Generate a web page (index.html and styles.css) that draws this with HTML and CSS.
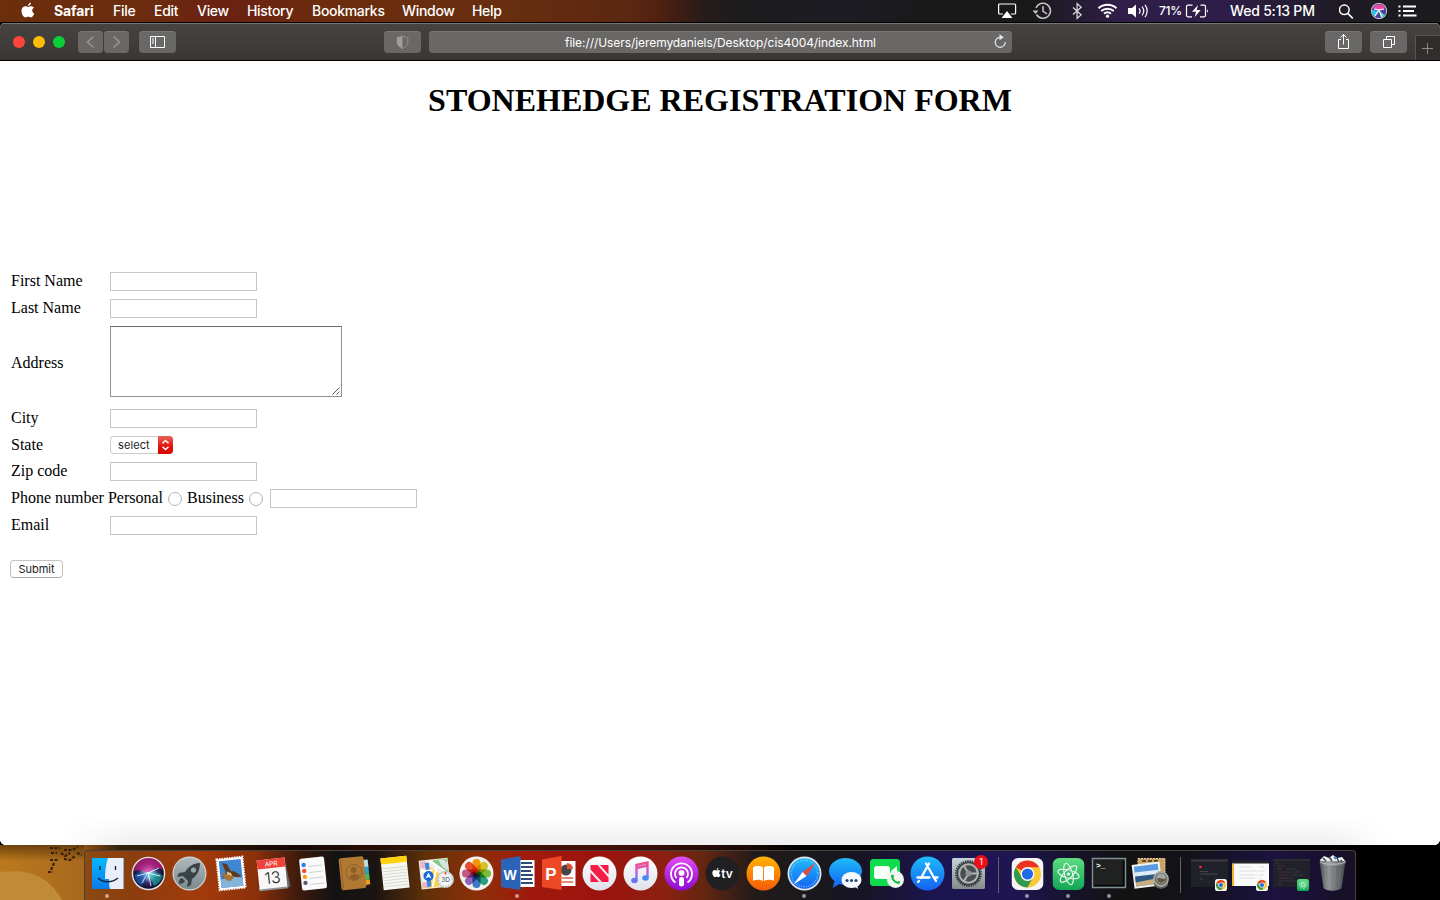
FILE: index.html
```html
<!DOCTYPE html>
<html lang="en">
<head>
<meta charset="utf-8">
<title>Stonehedge Registration Form</title>
<link rel="stylesheet" href="styles.css">
</head>
<body>
<svg class="defs" width="0" height="0" aria-hidden="true">
<defs>
<linearGradient id="gBlue" x1="0" y1="0" x2="0" y2="1"><stop offset="0" stop-color="#1ebcfa"/><stop offset="1" stop-color="#1560f0"/></linearGradient>
<linearGradient id="gFinder" x1="0" y1="0" x2="0" y2="1"><stop offset="0" stop-color="#04b8ff"/><stop offset="1" stop-color="#0d7bea"/></linearGradient>
<linearGradient id="gGrey" x1="0" y1="0" x2="0" y2="1"><stop offset="0" stop-color="#aeb9bd"/><stop offset="1" stop-color="#7c898d"/></linearGradient>
<linearGradient id="gWhite" x1="0" y1="0" x2="0" y2="1"><stop offset="0" stop-color="#fff"/><stop offset="1" stop-color="#dfe2ec"/></linearGradient>
<linearGradient id="gPurple" x1="0" y1="0" x2="0" y2="1"><stop offset="0" stop-color="#e34cf4"/><stop offset="1" stop-color="#8d0bd0"/></linearGradient>
<linearGradient id="gOrange" x1="0" y1="0" x2="0" y2="1"><stop offset="0" stop-color="#ffb400"/><stop offset="1" stop-color="#f75a08"/></linearGradient>
<linearGradient id="gGreen" x1="0" y1="0" x2="0" y2="1"><stop offset="0" stop-color="#5fdc80"/><stop offset="1" stop-color="#12a557"/></linearGradient>
<linearGradient id="gMusic" gradientUnits="userSpaceOnUse" x1="0" y1="12" x2="0" y2="34"><stop offset="0" stop-color="#fb4c7c"/><stop offset=".5" stop-color="#c05ce8"/><stop offset="1" stop-color="#2f9bff"/></linearGradient>
<linearGradient id="gTrash" x1="0" y1="0" x2="1" y2="0"><stop offset="0" stop-color="#55595a"/><stop offset=".35" stop-color="#9a9e9f"/><stop offset=".65" stop-color="#75797a"/><stop offset="1" stop-color="#4b4f50"/></linearGradient>
<linearGradient id="gRim" x1="0" y1="0" x2="0" y2="1"><stop offset="0" stop-color="#c3d3d8"/><stop offset="1" stop-color="#858b8e"/></linearGradient>
<radialGradient id="gSiri"><stop offset="0" stop-color="#fff"/><stop offset=".22" stop-color="#9cc2e8"/><stop offset=".6" stop-color="#35306d"/><stop offset="1" stop-color="#0c0a22"/></radialGradient>
<symbol id="apple" viewBox="0 0 14 15"><path d="M9.900 0C8.300.3 7.100 1.700 7.200 3.400 8.800 3.300 10 1.800 9.900 0zM7.300 4.500C6.500 4.500 5.700 3.800 4.400 3.800 2.400 3.800.5 5.400.5 8.400c0 3.200 2.200 6.500 4 6.500 1 0 1.500-.6 2.800-.6s1.700.6 2.700.6c1.400 0 2.700-2 3.300-3.800-1.300-.5-2.100-1.600-2.100-3 0-1.200.6-2.100 1.700-2.800-.7-1-1.800-1.500-2.900-1.500-1.200 0-2 .7-2.700.7z"/></symbol>
<symbol id="chrome" viewBox="0 0 32 32"><rect width="32" height="32" rx="7" fill="#f5f5f5"/><circle cx="16" cy="16" r="13.500" fill="#fcc934"/><path d="M16 16 4.300 9.250A13.500 13.500 0 0 1 27.700 9.250H16z" fill="#ea3323"/><path d="M4.300 9.250A13.500 13.500 0 0 0 16 29.500l5.600-10.300L10.400 19.200z" fill="#31994f"/><circle cx="16" cy="16" r="6.900" fill="#fff"/><circle cx="16" cy="16" r="5.600" fill="#1f6be8"/></symbol>
<symbol id="atom" viewBox="0 0 32 32"><rect width="32" height="32" rx="7" fill="url(#gGreen)"/><g fill="none" stroke="#fff"><ellipse cx="16" cy="16" rx="11" ry="4" transform="rotate(15 16 16)"/><ellipse cx="16" cy="16" rx="11" ry="4" transform="rotate(75 16 16)"/><ellipse cx="16" cy="16" rx="11" ry="4" transform="rotate(135 16 16)"/></g><circle cx="16" cy="16" r="1.600" fill="#fff"/></symbol>
</defs>
</svg>

<header class="menubar">
  <svg class="apple-logo" width="14" height="16"><use href="#apple" width="14" height="16"/></svg>
  <nav class="menus">
    <b>Safari</b><span>File</span><span>Edit</span><span>View</span><span>History</span><span>Bookmarks</span><span>Window</span><span>Help</span>
  </nav>
  <div class="status">
    <svg class="status-icons" width="160" height="22" fill="none" stroke="#fff" stroke-width="1.200">
      <path d="M5 14H1.600a1 1 0 0 1-1-1V5a1 1 0 0 1 1-1h15a1 1 0 0 1 1 1v8a1 1 0 0 1-1 1H13"/><path d="M9 11l5.500 7h-11z" fill="#fff" stroke="none"/>
      <g stroke="#c6c6c6" stroke-width="1.500"><path d="M38 8a7.500 7.500 0 1 1 .5 6.500"/><path d="M45 6v5.400l4 2.500"/><path d="M34.500 10.500h6l-3 3.600z" fill="#c6c6c6" stroke="none"/></g>
      <path d="M75 7.500l8.200 7.200-4.100 3.800V3.500l4.100 3.800-8.200 7.200" stroke="#ddd"/>
      <g stroke-width="2"><path d="M100.500 8.200a13.600 13.600 0 0 1 18 0"/><path d="M103.200 11a9.800 9.800 0 0 1 12.600 0"/><path d="M106 13.600a5.600 5.600 0 0 1 7 0"/></g><circle cx="109.500" cy="16.200" r="1.600" fill="#fff" stroke="none"/>
      <path d="M130 8h4l4-3.500v13L134 14h-4z" fill="#fff" stroke="none"/><path d="M141 8.400a4 4 0 0 1 0 5.200M144 6.600a7 7 0 0 1 0 8.800M147 4.800a10 10 0 0 1 0 12.400"/>
    </svg>
    <span class="percent">71%</span>
    <svg class="battery" width="24" height="22" fill="none" stroke="#fff" stroke-width="1.200"><path d="M7.500 5.200H3a1.500 1.500 0 0 0-1.500 1.500v8.600A1.500 1.500 0 0 0 3 16.800h4M15.500 5.200H19a1.500 1.500 0 0 1 1.500 1.500v8.600a1.500 1.500 0 0 1-1.500 1.500h-4"/><path d="M13 5l-6 6.800h4L9.700 17l6-7h-4zM22 9.200c1.300.6 1.300 3 0 3.600z" fill="#fff" stroke="none"/></svg>
    <span class="clock">Wed 5:13 PM</span>
    <svg class="status-right" width="80" height="22" fill="none" stroke="#fff" stroke-width="1.500"><circle cx="5.300" cy="9.800" r="4.800"/><path d="M8.800 13.400l5 5"/>
      <circle cx="40" cy="11" r="8" fill="#f1f1f6" stroke="none"/><circle cx="40" cy="11" r="7.300" fill="#533b9d" stroke="none"/><path d="M34 8a7 7 0 0 1 12 0l-6 3z" fill="#ee49a7" stroke="none"/><path d="M33 10l7 1-4 6a7 7 0 0 1-3-7z" fill="#2cc4e9" stroke="none"/><path d="M40 11l6 4a7 7 0 0 1-4 3z" fill="#38dfc2" stroke="none"/><path d="M36 16l4-6 3 7M40 10l5-1M40 10l-5-1" stroke="#fff" stroke-width="1.100"/>
      <path d="M64 6.500h13M64 11h11M64 15.500h13.500M59.500 6.500h2M59.500 11h2M59.500 15.500h2" stroke-width="2"/></svg>
  </div>
</header>

<main class="window">
  <div class="toolbar">
    <div class="lights"><i class="red"></i><i class="yellow"></i><i class="green"></i></div>
    <div class="tool nav back"><svg width="25" height="22" fill="none" stroke="#979695" stroke-width="1.500"><path d="M15.500 5.500l-6 5.500 6 5.500"/></svg></div>
    <div class="tool nav"><svg width="25" height="22" fill="none" stroke="#979695" stroke-width="1.500"><path d="M9.500 5.500l6 5.500-6 5.500"/></svg></div>
    <div class="tool sidebar"><svg width="37" height="22" fill="none" stroke="#fff"><path d="M11.500 5.500h14v11h-14zM16.500 5.500v11M13 8h2M13 10h2M13 12h2"/></svg></div>
    <div class="tool privacy"><svg width="37" height="22"><path d="M18.500 4.800c1.500 1.200 3.500 1.500 5.300 1.700v5c0 2.500-2.500 4.500-5.300 6-2.800-1.500-5.300-3.500-5.300-6v-5c1.800-.2 3.800-.5 5.300-1.700z" fill="none" stroke="#929190"/><path d="M18.500 4.800v12.700c-2.800-1.500-5.300-3.500-5.300-6v-5c1.800-.2 3.800-.5 5.300-1.700z" fill="#a09f9e"/></svg></div>
    <div class="tool address"><span>file:///Users/jeremydaniels/Desktop/cis4004/index.html</span><svg width="14" height="16" fill="none" stroke="#e5e5e5" stroke-width="1.200"><path d="M7.500 3.300a5 5 0 1 0 4.700 4.700"/><path d="M6.500.2l4.300 3-4.300 3z" fill="#e5e5e5" stroke="none"/></svg></div>
    <div class="tool share"><svg width="37" height="22" fill="none" stroke="#fff"><path d="M16 8.500h-2.500v9h10v-9H21M18.500 13.500v-10M15.500 6.500l3-3 3 3"/></svg></div>
    <div class="tool tabs"><svg width="37" height="22" fill="none" stroke="#fff"><path d="M13.500 8.500h8v8h-8z"/><path d="M16.500 8V5.500h8v8H22"/></svg></div>
    <div class="newtab"><svg width="24" height="24" stroke="#8c8b8a"><path d="M6 12.500h11M11.500 7v11"/></svg></div>
  </div>

  <div class="page">
    <h1>STONEHEDGE REGISTRATION FORM</h1>
    <form>
      <div class="row"><label>First Name</label><input class="field" type="text"></div>
      <div class="row"><label>Last Name</label><input class="field" type="text"></div>
      <div class="row tall"><label>Address</label><div class="area"><svg width="10" height="10" stroke="#444" stroke-width=".9"><path d="M1.500 8.500L8.500 1.500M5.500 8.500L8.500 5.500"/></svg></div></div>
      <div class="row"><label>City</label><input class="field" type="text"></div>
      <div class="row state"><label>State</label><div class="select"><span>select</span><svg width="15" height="18" fill="none" stroke="#fff" stroke-width="1.400"><path d="M4.500 7.300l3-2.800 3 2.800M4.500 10.700l3 2.800 3-2.800"/></svg></div></div>
      <div class="row"><label>Zip code</label><input class="field" type="text"></div>
      <div class="row"><span class="phone">Phone number Personal</span><i class="radio"></i><span class="business">Business</span><i class="radio"></i><input class="field number" type="text"></div>
      <div class="row"><label>Email</label><input class="field" type="text"></div>
      <button class="submit" type="button">Submit</button>
    </form>
  </div>
</main>

<footer class="desktop">
  <svg class="wallpaper" width="84" height="55"><path d="M0 27c28-3 48 3 62 28H0z" fill="#c08b37"/><g fill="none" stroke="#3b1e08" stroke-width="2.200" stroke-dasharray="3 1.500"><path d="M50 3h10M64 5h8l6-3M51 8h6M61 8l4 3 5-3M64 14l6 1 5-4M77 8l5 2M50 15h8M54 18l-3 7M48 27h5"/></g></svg>
  <div class="dock">
    <svg class="app" viewBox="0 0 41 50"><path d="M5 8h31.500v31H5z" fill="url(#gFinder)"/><path d="M21 8h15.500v31H23c-.8-3-1-6-1-10h-4C18 20 19 14 21 8z" fill="#e8eff9"/><path d="M13 16v4M28.500 16v4" stroke="#172436" stroke-width="1.400"/><path d="M11 28c5 5 14 5 20 0" fill="none" stroke="#172436" stroke-width="1.300"/><circle class="running" cx="20" cy="46" r="2"/></svg>
    <svg class="app" viewBox="0 0 41 50"><circle cx="20.500" cy="23.500" r="16.800" fill="#e1e1e5"/><circle cx="20.500" cy="23.500" r="15.300" fill="url(#gSiri)"/><path d="M6 21C8 4 32 4 35 20c-7-4-10-1-14 3-5-1-9-4-15-2z" fill="#ed1e91" opacity=".62"/><path d="M6 25c5-3 10-3 15-2l-7 13c-4-2-7-6-8-11z" fill="#1769c8" opacity=".6"/><path d="M20 23c6-1 11-1 15 3-2 5-5 8-9 10z" fill="#14cab2" opacity=".55"/><path d="M9 26l11-3 11-5M20 22l3 14M20 22l-6 11M20 23l12 3" fill="none" stroke="#fff" opacity=".8"/></svg>
    <svg class="app" viewBox="0 0 41 50"><circle cx="20.500" cy="23.500" r="17" fill="#ced4d6"/><circle cx="20.500" cy="23.500" r="15.800" fill="url(#gGrey)"/><path d="M31 13c-7 0-12 4-15 9l-6 1-2 4 6-1 5 5-1 6 4-2 1-6c5-3 8-9 8-16z" fill="#3b4246"/><circle cx="24.500" cy="20" r="2.600" fill="#9ba6aa"/><path d="M13 28c-3 1-3 4-3 6 3 0 5-1 6-3z" fill="#3b4246"/></svg>
    <svg class="app" viewBox="0 0 41 50"><g transform="rotate(-6 21 23)"><path d="M8 8h26v31H8z" fill="#fff" stroke="#fff" stroke-width="2" stroke-dasharray="1.500 1"/><path d="M10 10h22v27H10z" fill="#3f86d3"/><path d="M10 29c5-3 9 2 14-2l8 2v8H10z" fill="#86b3da"/><path d="M13 12l5 2 3 7 4 1 6 5-4 1-6-2-5 2-4-2 4-4z" fill="#5b3c22"/><path d="M12 22l7 2 5 3-4 4-4-1-3-4z" fill="#a57436"/><path d="M17 21l4 2 1 3-5-2z" fill="#e1c08a"/></g></svg>
    <svg class="app" viewBox="0 0 41 50"><g transform="rotate(-6 21 23)"><path d="M6 37h29l1 3H7z" fill="#8e9292"/><path d="M35 11l3 27-3 1z" fill="#606a6c"/><path d="M7 9h28v29H7z" fill="#f7f7f7"/><path d="M7 9h28v9H7z" fill="#ef423a"/><text x="21" y="16" class="cal-month">APR</text><text x="21" y="33.500" class="cal-day">13</text></g></svg>
    <svg class="app" viewBox="0 0 41 50"><g transform="rotate(-6 21 23)"><rect x="8.500" y="7.500" width="25" height="32" rx="2" fill="#fafafa"/><circle cx="12.500" cy="14" r="2.200" fill="#307cf4"/><circle cx="12.500" cy="20" r="2.200" fill="#f54b3b"/><circle cx="12.500" cy="26" r="2.200" fill="#ff9e12"/><circle cx="12.500" cy="32" r="2.200" fill="#525e6b"/><path d="M17 16h14M17 22h14M17 28h14M17 34h14" stroke="#d1d1d4"/></g></svg>
    <svg class="app" viewBox="0 0 41 50"><g transform="rotate(-6 21 23)"><path d="M31 11h5v8h-5z" fill="#c2d9dc"/><path d="M31 18h5v7h-5z" fill="#2aa5c8"/><path d="M31 25h5v6h-5z" fill="#50b85a"/><path d="M31 31h5v5h-5z" fill="#f39b1f"/><rect x="7" y="7" width="25" height="32" rx="2" fill="#b07a35"/><path d="M9 8v31" stroke="#94642a"/><circle cx="21" cy="22.500" r="8" fill="none" stroke="#946429"/><circle cx="21" cy="20" r="3" fill="#8d5f27"/><path d="M15.500 27c2-4 9-4 11 0-3 4-8 4-11 0z" fill="#8d5f27"/></g></svg>
    <svg class="app" viewBox="0 0 41 50"><g transform="rotate(-6 21 23)"><path d="M8 7h26v32H8z" fill="#f7f7f2"/><path d="M8 7h26v6H8z" fill="#ffd20b"/><path d="M9 17.500h24M9 20.500h24M9 23.500h24M9 26.500h24M9 29.500h24M9 32.500h24M9 35.500h24" stroke="#cececb" stroke-width=".7"/></g></svg>
    <svg class="app" viewBox="0 0 41 50"><g transform="rotate(-6 21 23)"><path d="M5 9h29v29H5z" fill="#efede2"/><path d="M19 10h14v13c-7-1-12-7-14-13z" fill="#83cb83"/><path d="M25 10h5l4 6v6c-5-2-8-7-9-12z" fill="#d8e2e0"/><path d="M14 15l14 12-6 10H10z" fill="#ffd347"/><path d="M6 10h6v7H6zM6 31h6v6H6z" fill="#e9b7c1"/><path d="M13 12v24" stroke="#3c85ea" stroke-width="4"/><path d="M16 10l17 15M6 20h12M22 17l-6 20" stroke="#fff" stroke-width="2"/></g><circle cx="13.500" cy="26" r="5" fill="#1668dd"/><path d="M13.500 22.500l3 6-3-1.500-3 1.500z" fill="#fff"/><circle cx="30.500" cy="29.500" r="8" fill="#f4f5f5" stroke="#adb9c0"/><circle cx="30.500" cy="29.500" r="6.500" fill="none" stroke="#82939d" stroke-width=".8" stroke-dasharray="1 2"/><text x="30.500" y="32" class="map-text">3D</text><path d="M30.500 22v2.500" stroke="#ef3e34" stroke-width="1.500"/></svg>
    <svg class="app photos" viewBox="0 0 41 50"><circle cx="20.500" cy="23.500" r="17" fill="#f2f1ef"/><g><rect x="16.500" y="9" width="8" height="14.500" rx="4" fill="#ff9f0a"/><rect x="16.500" y="9" width="8" height="14.500" rx="4" fill="#e3cf1d" transform="rotate(45 20.500 23.500)"/><rect x="16.500" y="9" width="8" height="14.500" rx="4" fill="#86c63f" transform="rotate(90 20.500 23.500)"/><rect x="16.500" y="9" width="8" height="14.500" rx="4" fill="#2aa886" transform="rotate(135 20.500 23.500)"/><rect x="16.500" y="9" width="8" height="14.500" rx="4" fill="#3f83cf" transform="rotate(180 20.500 23.500)"/><rect x="16.500" y="9" width="8" height="14.500" rx="4" fill="#996bc0" transform="rotate(225 20.500 23.500)"/><rect x="16.500" y="9" width="8" height="14.500" rx="4" fill="#cf5b93" transform="rotate(270 20.500 23.500)"/><rect x="16.500" y="9" width="8" height="14.500" rx="4" fill="#ef5433" transform="rotate(315 20.500 23.500)"/></g></svg>
    <svg class="app" viewBox="0 0 41 50"><path d="M22 10h15.500v27H22z" fill="#fff"/><path d="M24 13h11M24 17h12M24 21h10M24 25h12M24 29h11M24 33h12" stroke="#304a76" stroke-width="1.800"/><path d="M4 9.500l19.500-3.500v34L4 37z" fill="#2b63b6"/><text x="13" y="29.500" class="letter word">W</text><circle class="running" cx="20" cy="46" r="2"/></svg>
    <svg class="app" viewBox="0 0 41 50"><path d="M22 11h15.500v25H22z" fill="#fff"/><circle cx="28" cy="20" r="5.500" fill="#454545"/><path d="M29 19v-6a6 6 0 0 1 6 6z" fill="#e74c31"/><path d="M24 28h11M24 32h11" stroke="#df6243" stroke-width="1.500"/><path d="M4 9.500l19.500-3.500v34L4 37z" fill="#ed4924"/><text x="13" y="29.500" class="letter">P</text></svg>
    <svg class="app" viewBox="0 0 41 50"><circle cx="20.500" cy="23.500" r="17" fill="url(#gWhite)"/><path d="M11.500 15h7l11 12.500V32h-6.500L11.500 19.500zM21 15h8.500v9.500zM11.500 22.500L20 32h-8.500z" fill="#f51d48"/></svg>
    <svg class="app" viewBox="0 0 41 50"><circle cx="20.500" cy="23.500" r="17" fill="url(#gWhite)"/><path d="M16.500 30V15l11-2.500v15M16.500 18l11-2.500" fill="none" stroke="url(#gMusic)" stroke-width="2.400"/><ellipse cx="14.500" cy="30.500" rx="3.300" ry="2.800" fill="#6974ed"/><ellipse cx="25.500" cy="28" rx="3.300" ry="2.800" fill="#4a8bf2"/></svg>
    <svg class="app" viewBox="0 0 41 50"><circle cx="20.500" cy="23.500" r="17" fill="url(#gPurple)"/><g fill="none" stroke="#fff" stroke-width="1.800"><path d="M14.500 32.500a10.500 10.500 0 1 1 12 0"/><path d="M15.500 28a6.500 6.500 0 1 1 10 0"/></g><circle cx="20.500" cy="23" r="2.900" fill="#fff"/><rect x="18" y="27" width="5" height="9.500" rx="2.300" fill="#fff"/></svg>
    <svg class="app" viewBox="0 0 41 50"><circle cx="20.500" cy="23.500" r="17" fill="#202022"/><use href="#apple" x="10" y="17" width="9" height="11" fill="#fff"/><text x="25" y="28" class="tv">tv</text></svg>
    <svg class="app" viewBox="0 0 41 50"><circle cx="20.500" cy="23.500" r="17" fill="url(#gOrange)"/><path d="M20 31c-2.500-1.500-7-1.500-10-.3V17.500c3-2 7.500-1.800 10 0zM21 31c2.500-1.500 7-1.500 10-.3V17.500c-3-2-7.500-1.800-10 0z" fill="#fff"/></svg>
    <svg class="app" viewBox="0 0 41 50"><circle cx="20.500" cy="23.500" r="17" fill="#dfe5e8"/><circle cx="20.500" cy="23.500" r="15.300" fill="url(#gBlue)"/><circle cx="20.500" cy="23.500" r="13.200" fill="none" stroke="#acdafc" stroke-width="1.600" stroke-dasharray=".5 1.300"/><path d="M31.500 13L22.500 26l-4-4z" fill="#f04437"/><path d="M9.500 34.500l9-12.500 4 4z" fill="#fff"/><circle class="running" cx="20" cy="46" r="2"/></svg>
    <svg class="app" viewBox="0 0 41 50"><path d="M20.500 8c9 0 16.500 6 16.500 13s-7.500 14-16.500 14c-2 0-4 0-6-1l-7 4 2-7C6 28.500 4 25 4 21 4 14 11.500 8 20.500 8z" fill="url(#gBlue)"/><ellipse cx="26.500" cy="30" rx="10" ry="8" fill="#f5f9ff"/><path d="M29 36l4 3-1-5z" fill="#f5f9ff"/><g fill="#244874"><circle cx="22" cy="30.500" r="1.600"/><circle cx="26.500" cy="30.500" r="1.600"/><circle cx="31" cy="30.500" r="1.600"/></g></svg>
    <svg class="app" viewBox="0 0 41 50"><rect x="4" y="9" width="30" height="27" rx="3.500" fill="#0fdc4d"/><rect x="8" y="16" width="16" height="13" rx="3" fill="#f6fff8"/><path d="M25 21l6-5v13l-6-4z" fill="#f6fff8"/><circle cx="29.500" cy="29.500" r="8.500" fill="#f3f5f3"/><path d="M25 25.500c1-2 3-1 3 1l-.5 1.500c1 2 2 3 3.500 3.500l1.500-.5c2 0 2 2 .5 3-4 0-8-4-8-8.500z" fill="#10bf43"/></svg>
    <svg class="app" viewBox="0 0 41 50"><circle cx="20.500" cy="23.500" r="17" fill="url(#gBlue)"/><g stroke="#fff" stroke-width="2.300" stroke-linecap="round"><path d="M22 13.500L14 28M19 13.500L29 31M10.500 27.500h12M26.500 27.500h4M12 31l-1 1"/></g></svg>
    <svg class="app" viewBox="0 0 41 50"><rect x="4" y="8" width="33" height="31" rx="1.500" fill="url(#gRim)"/><circle cx="20.500" cy="23.500" r="12" fill="#4b4e50" stroke="#35383a" stroke-width="3" stroke-dasharray="1.200 1"/><circle cx="20.500" cy="23.500" r="9.300" fill="none" stroke="#b1b4b5" stroke-width="2"/><path d="M20.500 23.500h10M20.500 23.500l-5-8.500M20.500 23.500l-5 8.500" stroke="#b1b4b5" stroke-width="2"/><circle cx="20.500" cy="23.500" r="3" fill="#8f9294"/><circle cx="33" cy="12" r="7" fill="#ed101b"/><text x="33" y="15.300" class="badge">1</text></svg>
    <i class="divider"></i>
    <svg class="app" viewBox="0 0 41 50"><use href="#chrome" x="4.500" y="8" width="32" height="32"/><circle class="running" cx="20" cy="46" r="2"/></svg>
    <svg class="app" viewBox="0 0 41 50"><use href="#atom" x="4.500" y="8" width="32" height="32"/><circle class="running" cx="20" cy="46" r="2"/></svg>
    <svg class="app" viewBox="0 0 41 50"><path d="M3.500 8.500h33v29h-33z" fill="#202222" stroke="#7d9296" stroke-width="1.400"/><path d="M5 35.500h29.500v-25" fill="none" stroke="#050606" stroke-width="1.500"/><text x="7" y="18" class="terminal">&gt;_</text><circle class="running" cx="20" cy="46" r="2"/></svg>
    <svg class="app" viewBox="0 0 41 50"><path d="M8 8.500h27v23H8z" fill="#caa262" stroke="#ead2a1" stroke-dasharray="2 1"/><path d="M12 11h18" stroke="#634a2b" stroke-width="2" stroke-dasharray="4 2"/><g transform="rotate(-7 18 25)"><path d="M3 13h28v24H3z" fill="#f0f2ef"/><path d="M5 15h24v20H5z" fill="#5a9be2"/><path d="M5 21h24v5H5z" fill="#dcedf6"/><path d="M5 26h24v9H5z" fill="#c7ab81"/><path d="M5 25h24v4L5 31z" fill="#2e5685"/></g><path d="M24 29h14v6c-3 5-11 5-14 0z" fill="#60605b"/><circle cx="31" cy="29" r="7" fill="#6f6860" stroke="#a6a6a0" stroke-width="1.800"/><circle cx="31" cy="28.500" r="4.800" fill="#9fa6a4"/><path d="M27 29c3-3 6 2 9-1-1 6-8 6-9 1z" fill="#63543f"/></svg>
    <i class="divider"></i>
    <svg class="app" viewBox="0 0 41 50"><path d="M2 9h37v28H2z" fill="#20222a"/><path d="M2 10.500h37" stroke="#39383c" stroke-width="2"/><circle cx="11.500" cy="17" r="1.300" fill="#f42c31"/><path d="M11 21.500h8M11 24h18M11 29h3" stroke="#4b4d56" stroke-width=".8"/><use href="#chrome" x="26" y="29" width="12" height="12"/></svg>
    <svg class="app" viewBox="0 0 41 50"><path d="M2 11h37v25H2z" fill="#fafafa"/><path d="M2 12h37" stroke="#242228" stroke-width="3"/><path d="M2 14h2v22H2z" fill="#f0b526"/><path d="M9 17h13M9 21h19M9 25h18M9 28h16M29 17h5M29 21h6M29 25h5M29 29h4" stroke="#dcddde"/><use href="#chrome" x="26" y="29" width="12" height="12"/></svg>
    <svg class="app" viewBox="0 0 41 50"><path d="M2 9h37v28H2z" fill="#20212a"/><path d="M2 10h37" stroke="#3b383d"/><path d="M4 13h4M6 16h8M6 19h5M8 22h13M8 25h10M8 28h14M8 31h10M6 34h5" stroke="#603a48" stroke-width=".6"/><path d="M16 19h8M20 25h12M23 22h6M19 31h7" stroke="#424e54" stroke-width=".6"/><use href="#atom" x="26" y="29" width="12" height="12"/></svg>
    <svg class="app" viewBox="0 0 41 50"><path d="M8 10l4-4 5 2 4-3 4 3 5-1 4 5-3 4H11z" fill="#edf0f1"/><path d="M11 8l3 3M17 7l3 4M25 8l2 4M30 10l-2 2" stroke="#434347" stroke-width="1.500"/><path d="M22 7l2 2" stroke="#348acb" stroke-width="2"/><path d="M7.500 11h26l-4 27c-3 3.500-15 3.500-18 0z" fill="url(#gTrash)" opacity=".92"/><path d="M8 12c4 3 21 3 25 0" fill="none" stroke="#b6babb"/><path d="M12.500 17l2 19M17.500 17l1 20M23.500 17l-1 20M28.500 17l-2 19" stroke="#a4a8a9" opacity=".25"/></svg>
  </div>
</footer>
</body>
</html>
```
FILE: styles.css
```css
* { box-sizing: border-box; }
body { margin: 0; width: 1440px; height: 900px; overflow: hidden; display: flex; flex-direction: column; background: #000; font-family: Inter, "Liberation Sans", sans-serif; }
svg { display: block; flex: none; }
.defs { position: absolute; }

.menubar { height: 23px; flex: none; display: flex; border-bottom: 1px solid #000; color: #fff; font-size: 14px; font-weight: 500; line-height: 22px; white-space: nowrap; background: linear-gradient(90deg, #6b2f0c 0, #6c2b0e 150px, #6a2112 225px, #6c2c0d 320px, #662e0f 520px, #5c2711 630px, #502011 660px, #251c19 705px, #1c1c1e 740px, #1d1c24 850px, #191919 930px, #191919 1030px, #301e49 1120px, #2e1d49 1220px, #1f1b25 1340px, #1b1a1c 1440px); }
.apple-logo { margin: 2px 19px 0 21px; fill: #fff; }
.menus { width: 944px; display: grid; grid-template-columns: 59px 41px 43px 50px 65px 90px 70px 60px; letter-spacing: -.3px; }
.menus b { font-weight: 700; letter-spacing: -.1px; }
.status { display: flex; }
.percent { width: 26px; font-size: 12px; letter-spacing: -.3px; margin-left: 1px; }
.battery { margin-right: 21px; }
.clock { width: 109px; letter-spacing: -.2px; }

.window { height: 822px; flex: none; display: flex; flex-direction: column; border-radius: 5px 5px 6px 6px; overflow: hidden; background: #fff; }
.toolbar { height: 38px; flex: none; display: flex; padding: 7px 0 0 13px; border-top: 1px solid #777573; border-bottom: 1px solid #000; background: linear-gradient(#474341, #393634); }
.lights { width: 65px; display: flex; gap: 8px; padding-top: 5px; }
.lights i { width: 12px; height: 12px; border-radius: 50%; }
.red { background: #ff443c; }
.yellow { background: #ffbd0a; }
.green { background: #08d038; }
.tool { height: 22px; border-radius: 4px; background: #6a6867; box-shadow: inset 0 1px #777574; }
.nav { width: 25px; }
.back { margin-right: 1px; }
.sidebar { width: 37px; margin-left: 10px; }
.privacy { width: 37px; margin-left: 208px; }
.address { width: 583px; margin-left: 8px; position: relative; display: flex; justify-content: center; color: #fff; font-size: 12px; line-height: 23px; }
.address span { letter-spacing: -.07px; }
.address svg { position: absolute; right: 5px; top: 3px; }
.share { width: 37px; margin-left: 313px; }
.tabs { width: 37px; margin-left: 8px; }
.newtab { width: 25px; height: 25px; margin: 4px 0 0 8px; border: 1px solid #585654; border-width: 1px 0 0 1px; background: #302d2c; }

.page { flex: 1; color: #000; font: 16px "Liberation Serif", serif; background: linear-gradient(90deg, #fff 60px, transparent 130px, transparent 1330px, #fff 1390px), linear-gradient(#fff 758px, #f8f8f8 768px, #efefef 784px); }
h1 { margin: 21px 0 0; height: 186px; text-align: center; font-size: 32px; line-height: 37px; }
form { padding-left: 11px; }
.row { height: 27px; display: flex; align-items: center; }
.row label { width: 99px; }
.row label, .phone, .business { line-height: 18px; padding-bottom: 2px; }
.field { width: 147px; height: 19px; margin: 0; padding: 1px; border: 1px solid #c7c7c7; background: #fff; outline: none; }
.tall { height: 83px; }
.area { width: 232px; height: 71px; align-self: flex-start; margin-top: 4px; border: 1px solid #8f8f8f; border-top-color: #6c6c6c; display: flex; justify-content: flex-end; align-items: flex-end; }
.state { height: 26px; }
.row.state label { padding-bottom: 0; }
.select { height: 18px; width: 63px; display: flex; justify-content: space-between; border-radius: 4px; box-shadow: inset 0 0 0 1px #ccc; overflow: hidden; font: 11px/18px Inter, sans-serif; letter-spacing: .1px; color: #222; }
.select span { margin-left: 8px; }
.select svg { background: linear-gradient(#ea6058, #e1140b 60%, #d90000); }
.phone { width: 157px; white-space: nowrap; }
.business { width: 62px; margin-left: 5px; }
.radio { width: 14px; height: 14px; border-radius: 50%; border: 1px solid #b3b3b3; }
.number { margin-left: 7px; }
.submit { width: 53px; height: 18px; margin: 21px 0 0 -1px; padding: 0; border: 1px solid #c3c3c3; border-bottom-color: #aaa; border-radius: 4px; background: #fff; color: #222; font: 11px/16px Inter, sans-serif; display: block; }

.desktop { height: 55px; flex: none; display: flex; background: linear-gradient(90deg, #b77018 0, #985313 80px, #33220b 120px, #180603 300px, #351504 450px, #451007 600px, #1a0905 750px, #000 800px); }
.wallpaper { background: linear-gradient(rgba(60, 32, 4, .6), transparent 16px), linear-gradient(90deg, #bb791b, #a7691e); }
.dock { width: 1272px; height: 50px; margin-top: 5px; padding-left: 2px; display: flex; border: 1px solid #47403d; border-bottom: 0; border-radius: 4px 4px 0 0; background: linear-gradient(90deg, #8c4912 0, #8c3d0e 50px, #a33b0b 115px, #8b300b 170px, #3b1a0d 215px, #131212 250px, #1b1412 290px, #603008 340px, #8b3008 390px, #a1180d 450px, #9b130e 520px, #8c2011 580px, #632611 620px, #211a1a 670px, #18181d 740px, #171426 780px, #1c1550 850px, #1f1552 930px, #17132d 985px, #121212 1040px, #131219 1100px, #1b1240 1190px, #171024 1272px); }
.app { width: 41px; height: 50px; margin-top: -1px; overflow: visible; }
.photos rect { mix-blend-mode: multiply; }
.photos { isolation: isolate; }
.divider { width: 18px; display: flex; flex: none; }
.divider::after { content: ""; width: 1px; height: 36px; margin: 6px 0 0 9px; background: #68616b; }
.running { fill: #fff; opacity: .55; }
.cal-month { font: 6.5px Inter, sans-serif; fill: #fff; text-anchor: middle; }
.cal-day { font: 300 16px Inter, sans-serif; fill: #222; text-anchor: middle; }
.map-text { font: 6.5px Inter, sans-serif; fill: #435766; text-anchor: middle; }
.letter { font: bold 17px "Liberation Sans", sans-serif; fill: #fff; text-anchor: middle; }
.word { font-size: 14px; }
.tv { font: 600 12px Inter, sans-serif; fill: #fff; text-anchor: middle; }
.badge { font: 9px Inter, sans-serif; fill: #fff; text-anchor: middle; }
.terminal { font: bold 8px "Liberation Mono", monospace; fill: #fff; }
```
